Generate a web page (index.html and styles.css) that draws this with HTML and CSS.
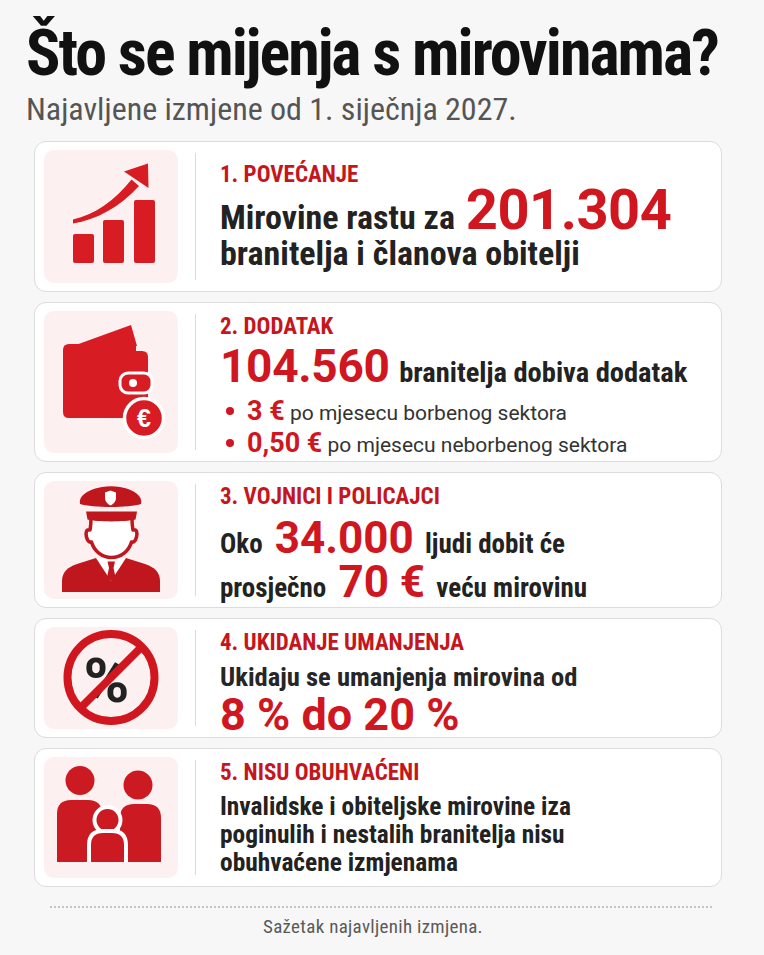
FILE: index.html
```html
<!DOCTYPE html>
<html lang="hr">
<head>
<meta charset="utf-8">
<title>Što se mijenja s mirovinama?</title>
<link rel="stylesheet" href="styles.css">
</head>
<body>
<main class="page">
  <header class="header">
    <h1 class="title">Što se mijenja s mirovinama?</h1>
    <p class="subtitle">Najavljene izmjene od 1. siječnja 2027.</p>
  </header>

  <section class="cards">
    <article class="card card--1">
      <div class="icon-box">
        <svg width="134" height="133" viewBox="0 0 134 133" aria-hidden="true">
          <g fill="#d81c23">
            <rect x="29" y="84" width="21" height="29" rx="2"/>
            <rect x="59" y="70" width="21" height="43" rx="2"/>
            <rect x="90" y="50" width="21" height="63" rx="2"/>
            <path d="M29,69.5 C50,65 71,50.5 87.5,29.5 L95,36 C76,57 52,70 29,73.5 Z"/>
            <polygon points="80,21.5 104,13.5 104.5,38"/>
          </g>
        </svg>
      </div>
      <div class="divider"></div>
      <div class="text text--first">
        <div class="label">1. POVEĆANJE</div>
        <p class="lead lead--lg">Mirovine rastu za <span class="num num--xl">201.304</span><span class="line-2">branitelja i članova obitelji</span></p>
      </div>
    </article>

    <article class="card card--2">
      <div class="icon-box">
        <svg width="134" height="141" viewBox="0 0 134 141" aria-hidden="true">
          <g fill="#d81c23">
            <polygon points="29,34 87,13 93,34"/>
            <path d="M25,32 H92 V39 H98 Q104,39 104,45 V100 Q104,106 98,106 H25 Q19,106 19,100 V38 Q19,32 25,32 Z"/>
            <rect x="76" y="61" width="32" height="20" rx="8" stroke="#ffffff" stroke-width="3"/>
            <circle cx="100" cy="106" r="19.5" stroke="#ffffff" stroke-width="3.5"/>
          </g>
          <circle cx="89" cy="71" r="4" fill="#ffffff"/>
          <text x="100" y="115" text-anchor="middle" class="svg-euro">€</text>
        </svg>
      </div>
      <div class="divider"></div>
      <div class="text">
        <div class="label">2. DODATAK</div>
        <p class="lead lead--md"><span class="num num--lg">104.560</span> <span class="after-num">branitelja dobiva dodatak</span></p>
        <ul class="bullets">
          <li><span class="dot"></span><strong class="bnum">3 €</strong> po mjesecu borbenog sektora</li>
          <li><span class="dot"></span><strong class="bnum">0,50 €</strong> po mjesecu neborbenog sektora</li>
        </ul>
      </div>
    </article>

    <article class="card card--3">
      <div class="icon-box">
        <svg width="134" height="118" viewBox="0 1 134 118" aria-hidden="true">
          <g fill="#c0161d">
            <path d="M18,112 V101 C18,92 24,87 33,84 L52,78 H82 L101,84 C110,87 116,92 116,101 V112 Z"/>
          </g>
          <path d="M52,78 L67,101 L82,78 Z" fill="#ffffff"/>
          <g fill="#c0161d">
            <path d="M63.5,81.5 H71 L69.5,88 H65 Z"/>
            <path d="M65,88 H69.5 L71.5,97 L67.3,101 L63,97 Z"/>
          </g>
          <path d="M47,38 C47,45 46.5,47 46,50 C42,49 41.5,53 42.5,57 C43.5,61 45.5,62.5 47.5,62 C50,71 58,77.5 67.5,77.5 C77,77.5 85,71 87.5,62 C89.5,62.5 91.5,61 92.5,57 C93.5,53 93,49 89,50 C88.5,47 88,45 88,38 Z" fill="#ffffff" stroke="#c0161d" stroke-width="3.5" stroke-linejoin="round"/>
          <g fill="#c0161d">
            <path d="M42,31.5 H93 L91.5,39.5 C80,42 54,42 43.5,39.5 Z"/>
            <path d="M36,24 C34,15 46,9 58,7 C64,6 70,6 76,7 C88,9 99,15 97,24 C85,28 49,28 36,24 Z"/>
          </g>
          <path d="M61,12.5 L66.5,10.5 L72,12.5 V18 C72,21.5 69.5,24 66.5,25.5 C63.5,24 61,21.5 61,18 Z" fill="#ffffff"/>
        </svg>
      </div>
      <div class="divider"></div>
      <div class="text">
        <div class="label">3. VOJNICI I POLICAJCI</div>
        <p class="lead lead--sm">Oko <span class="num num--md">34.000</span> ljudi dobit će<br>prosječno <span class="num num--md">70 €</span> veću mirovinu</p>
      </div>
    </article>

    <article class="card card--4">
      <div class="icon-box">
        <svg width="134" height="102" viewBox="0 2 134 102" aria-hidden="true">
          <text x="62.5" y="77" text-anchor="middle" class="svg-percent">%</text>
          <circle cx="67" cy="52.5" r="43.5" fill="none" stroke="#d0161e" stroke-width="8"/>
          <line x1="36" y1="83.5" x2="98" y2="21.5" stroke="#d0161e" stroke-width="8"/>
        </svg>
      </div>
      <div class="divider"></div>
      <div class="text">
        <div class="label">4. UKIDANJE UMANJENJA</div>
        <p class="lead lead--sm lead--thin">Ukidaju se umanjenja mirovina od</p>
        <p class="big">8 % do 20 %</p>
      </div>
    </article>

    <article class="card card--5">
      <div class="icon-box">
        <svg width="134" height="121" viewBox="0 2 134 121" aria-hidden="true">
          <g fill="#cb1a21">
            <circle cx="36" cy="25.5" r="14.5"/>
            <circle cx="94" cy="30" r="14.5"/>
            <path d="M13,107 V59 Q13,45 27,45 H44 Q58,45 58,59 V107 Z"/>
            <path d="M76,107 V63 Q76,49 90,49 H103 Q117,49 117,63 V107 Z"/>
          </g>
          <g fill="#cb1a21" stroke="#ffffff" stroke-width="8" class="child">
            <circle cx="63.5" cy="65" r="11"/>
            <path d="M47,107 V90 Q47,78 59,78 H68 Q80,78 80,90 V107"/>
          </g>
        </svg>
      </div>
      <div class="divider"></div>
      <div class="text">
        <div class="label">5. NISU OBUHVAĆENI</div>
        <p class="lead lead--xs">Invalidske i obiteljske mirovine iza<br>poginulih i nestalih branitelja nisu<br>obuhvaćene izmjenama</p>
      </div>
    </article>
  </section>

  <footer class="footer">
    <div class="rule"></div>
    <p class="note">Sažetak najavljenih izmjena.</p>
  </footer>
</main>
</body>
</html>
```

FILE: styles.css
```css
* { box-sizing: border-box; }

html, body {
  margin: 0;
  padding: 0;
}

body {
  background: #f7f7f7;
  color: #222222;
  font-family: "Liberation Sans Narrow", "Roboto Condensed", "Arial Narrow", "Liberation Sans", sans-serif;
}

.page {
  width: 764px;
  padding: 0 42px 0 34px;
}

.header {
  margin-left: -8px;
  padding-top: 22px;
}

.title {
  margin: 0;
  font-size: 64px;
  line-height: 64px;
  font-weight: 700;
  letter-spacing: -2px;
  color: #111111;
  white-space: nowrap;
}

.subtitle {
  margin: 5px 0 0;
  font-size: 32px;
  line-height: 36px;
  font-weight: 400;
  letter-spacing: 0;
  color: #555555;
  white-space: nowrap;
}

.cards {
  margin-top: 14px;
  display: flex;
  flex-direction: column;
  gap: 10px;
}

.card {
  display: flex;
  background: #ffffff;
  border: 1px solid #dcdcdc;
  border-radius: 12px;
}

.card--1 { min-height: 151px; }
.card--2 { min-height: 160px; }
.card--3 { min-height: 136px; }
.card--4 { min-height: 120px; }
.card--5 { min-height: 139px; }

.icon-box {
  flex: 0 0 134px;
  margin: 8px 0 8px 9px;
  background: #fdf0f0;
  border-radius: 10px;
  display: flex;
  align-items: center;
  justify-content: center;
}

.icon-box svg { display: block; }

.svg-euro {
  font-family: "Liberation Sans", Roboto, sans-serif;
  font-weight: 700;
  font-size: 25px;
  fill: #ffffff;
}

.svg-percent {
  font-family: Roboto, "Liberation Sans", sans-serif;
  font-weight: 700;
  font-size: 62px;
  fill: #222222;
}

.child { paint-order: stroke; }

.divider {
  flex: 0 0 1px;
  margin: 11px 24px 11px 17px;
  background: #dadada;
}

.text {
  flex: 1;
  padding-top: 14px;
}

.text--first { padding-top: 23px; }

.label {
  font-size: 23px;
  line-height: 20px;
  font-weight: 700;
  color: #c5161d;
  margin-bottom: 9px;
  white-space: nowrap;
}

.text--first .label { margin-bottom: 0; }

.lead {
  margin: 0;
  font-weight: 700;
  color: #222222;
  white-space: nowrap;
}

.lead--lg { font-size: 34px; line-height: 30px; }
.lead--md { font-size: 28.5px; line-height: 30px; }
.lead--sm { font-size: 27px; line-height: 30px; }
.lead--xs { font-size: 25.4px; line-height: 28px; }
.lead--thin { font-size: 26.6px; color: #262626; }

.line-2 {
  display: block;
  padding-top: 3px;
}

.num {
  font-family: Roboto, "Liberation Sans", sans-serif;
  font-weight: 700;
  color: #d0161e;
}

.num--xl {
  font-size: 56px;
  line-height: 50.4px;
  letter-spacing: -0.5px;
  margin-left: 3px;
}

.num--lg {
  font-size: 46px;
  line-height: 41.4px;
  letter-spacing: -0.3px;
}

.after-num { margin-left: 3px; }

.num--md {
  font-size: 44px;
  line-height: 44px;
  margin: 0 5px 0 6px;
}

.bullets {
  list-style: none;
  margin: 7.6px 0 0;
  padding: 0 0 0 6px;
}

.bullets li {
  font-family: Roboto, "Liberation Sans", sans-serif;
  font-size: 21px;
  line-height: 30px;
  color: #333333;
  white-space: nowrap;
}

.dot {
  display: inline-block;
  width: 8px;
  height: 8px;
  border-radius: 50%;
  background: #d0161e;
  margin-right: 13px;
  vertical-align: 5px;
}

.bnum {
  font-size: 27px;
  font-weight: 700;
  color: #d0161e;
}

.big {
  margin: 0;
  font-family: Roboto, "Liberation Sans", sans-serif;
  font-size: 45px;
  line-height: 45px;
  font-weight: 700;
  color: #d0161e;
  white-space: nowrap;
}

.footer {
  padding-top: 19px;
}

.rule {
  margin: 0 10px 0 16px;
  border-top: 2px dotted #c4c4c4;
}

.note {
  margin: 7px 10px 0 0;
  text-align: center;
  font-size: 19px;
  line-height: 24px;
  letter-spacing: 0.3px;
  color: #5a5a5a;
}
```
